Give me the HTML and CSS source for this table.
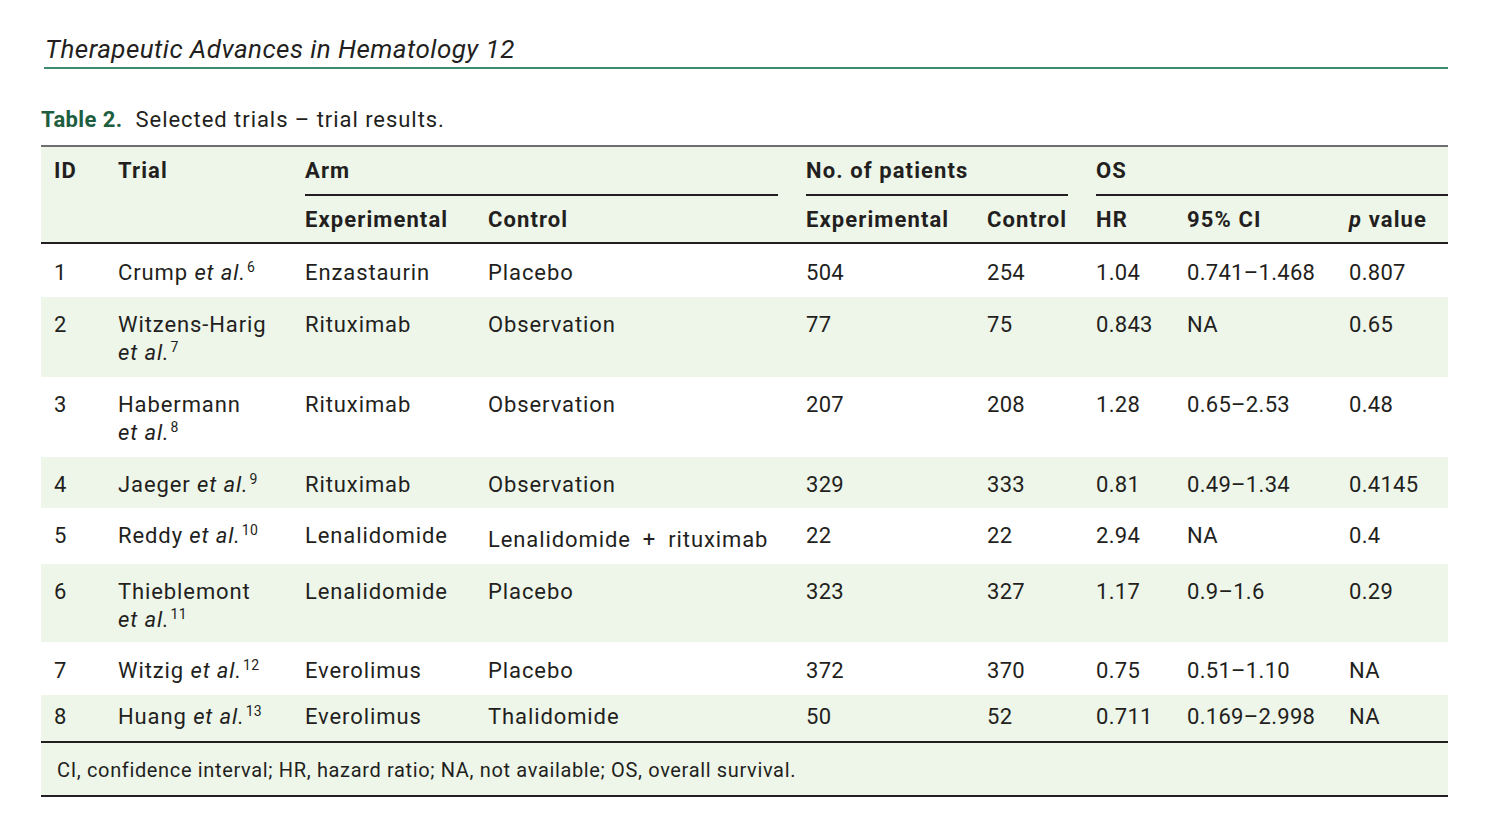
FILE: index.html
```html
<!DOCTYPE html>
<html lang="en">
<head>
<meta charset="utf-8">
<title>Table 2</title>
<link rel="stylesheet" href="styles.css">
</head>
<body>
<div class="page">
  <header class="running-head">Therapeutic Advances in Hematology 12</header>
  <p class="caption"><span class="label">Table 2.</span><span class="gap"></span>Selected trials – trial results.</p>
  <table class="results">
    <colgroup>
      <col class="c-id"><col class="c-trial"><col class="c-armexp"><col class="c-armctl">
      <col class="c-nexp"><col class="c-nctl"><col class="c-hr"><col class="c-ci"><col class="c-p">
    </colgroup>
    <thead>
      <tr class="h1">
        <th rowspan="2" class="span">ID</th>
        <th rowspan="2" class="span">Trial</th>
        <th colspan="2" class="grp"><div>Arm</div></th>
        <th colspan="2" class="grp"><div>No. of patients</div></th>
        <th colspan="3" class="grp last"><div>OS</div></th>
      </tr>
      <tr class="h2">
        <th>Experimental</th><th>Control</th><th>Experimental</th><th>Control</th><th>HR</th><th>95% CI</th><th><i>p</i> value</th>
      </tr>
    </thead>
    <tbody>
      <tr class="r1"><td>1</td><td>Crump <span class="etal"><i>et al.</i><sup>6</sup></span></td><td>Enzastaurin</td><td>Placebo</td><td>504</td><td>254</td><td>1.04</td><td>0.741–1.468</td><td>0.807</td></tr>
      <tr class="alt r2"><td>2</td><td>Witzens-Harig <span class="etal"><i>et al.</i><sup>7</sup></span></td><td>Rituximab</td><td>Observation</td><td>77</td><td>75</td><td>0.843</td><td>NA</td><td>0.65</td></tr>
      <tr class="r3"><td>3</td><td>Habermann <span class="etal"><i>et al.</i><sup>8</sup></span></td><td>Rituximab</td><td>Observation</td><td>207</td><td>208</td><td>1.28</td><td>0.65–2.53</td><td>0.48</td></tr>
      <tr class="alt r4"><td>4</td><td>Jaeger <span class="etal"><i>et al.</i><sup>9</sup></span></td><td>Rituximab</td><td>Observation</td><td>329</td><td>333</td><td>0.81</td><td>0.49–1.34</td><td>0.4145</td></tr>
      <tr class="r5"><td>5</td><td>Reddy <span class="etal"><i>et al.</i><sup>10</sup></span></td><td>Lenalidomide</td><td class="low">Lenalidomide<span class="plus">+</span>rituximab</td><td>22</td><td>22</td><td>2.94</td><td>NA</td><td>0.4</td></tr>
      <tr class="alt r6"><td>6</td><td>Thieblemont <span class="etal"><i>et al.</i><sup>11</sup></span></td><td>Lenalidomide</td><td>Placebo</td><td>323</td><td>327</td><td>1.17</td><td>0.9–1.6</td><td>0.29</td></tr>
      <tr class="r7"><td>7</td><td>Witzig <span class="etal"><i>et al.</i><sup>12</sup></span></td><td>Everolimus</td><td>Placebo</td><td>372</td><td>370</td><td>0.75</td><td>0.51–1.10</td><td>NA</td></tr>
      <tr class="alt r8"><td>8</td><td>Huang <span class="etal"><i>et al.</i><sup>13</sup></span></td><td>Everolimus</td><td>Thalidomide</td><td>50</td><td>52</td><td>0.711</td><td>0.169–2.998</td><td>NA</td></tr>
    </tbody>
    <tfoot>
      <tr><td colspan="9">CI, confidence interval; HR, hazard ratio; NA, not available; OS, overall survival.</td></tr>
    </tfoot>
  </table>
</div>
</body>
</html>
```

FILE: styles.css
```css
html, body {
  margin: 0;
  padding: 0;
  background: #ffffff;
}

body {
  font-family: Roboto, "Liberation Sans", sans-serif;
  color: #231f20;
}

.page {
  width: 1407px;
  margin-left: 41px;
}

.running-head {
  margin-left: 3px;
  padding: 31px 0 0 1px;
  font-size: 26px;
  line-height: 36px;
  font-style: italic;
  letter-spacing: 0.45px;
  border-bottom: 2px solid #3e8b6e;
}

.caption {
  margin: 37px 0 11px 0;
  font-size: 22px;
  line-height: 28px;
  letter-spacing: 0.95px;
}

.caption .label {
  font-weight: 700;
  color: #1c5e3e;
  letter-spacing: 0.4px;
}

.caption .gap {
  display: inline-block;
  width: 13px;
}

.results {
  width: 1407px;
  table-layout: fixed;
  border-collapse: collapse;
  font-size: 22px;
  line-height: 28px;
  letter-spacing: 0.3px;
}

.c-id { width: 64px; }
.c-trial { width: 187px; }
.c-armexp { width: 183px; }
.c-armctl { width: 318px; }
.c-nexp { width: 181px; }
.c-nctl { width: 109px; }
.c-hr { width: 91px; }
.c-ci { width: 162px; }
.c-p { width: 112px; }

.results thead {
  background: #eef6ea;
  border-top: 2px solid #6d6e71;
  border-bottom: 2px solid #231f20;
}

.results th {
  text-align: left;
  font-weight: 700;
  vertical-align: top;
  letter-spacing: 1.1px;
  padding: 10px 0 8px 13px;
}

.results .h1 th {
  padding-bottom: 0;
}

.results .h1 th.span {
  padding-bottom: 8px;
}

.results .h1 th.grp {
  padding-right: 15px;
}

.results .h1 th.grp.last {
  padding-right: 0;
}

.results .h1 th.grp div {
  padding-bottom: 9px;
  border-bottom: 2px solid #231f20;
}

.results td {
  vertical-align: top;
  padding: 14px 10px 10px 13px;
}

.results tbody td:nth-child(2),
.results tbody td:nth-child(3),
.results tbody td:nth-child(4) {
  letter-spacing: 0.9px;
}

.results tbody tr.alt {
  background: #eef6ea;
}

.results .r1 td, .results .r7 td { padding-top: 15px; padding-bottom: 10px; }
.results .r4 td { padding-bottom: 9px; }
.results .r5 td { padding-bottom: 14px; }
.results .r5 td.low { padding-top: 18px; padding-bottom: 10px; }
.results .r6 td { padding-bottom: 8px; }
.results .r8 td { padding-top: 8px; padding-bottom: 10px; }

.results .etal {
  white-space: nowrap;
}

.results i {
  font-style: italic;
}

.results sup {
  font-size: 14px;
  line-height: 0;
  vertical-align: 8px;
  margin-left: 1px;
  letter-spacing: 0.3px;
}

.results .plus {
  display: inline-block;
  margin: 0 12px;
}

.results tfoot {
  background: #eef6ea;
  border-top: 2px solid #231f20;
  border-bottom: 2px solid #231f20;
}

.results tfoot td {
  padding: 14px 0 12px 16px;
  font-size: 20px;
  line-height: 26px;
  letter-spacing: 0.65px;
}
```
